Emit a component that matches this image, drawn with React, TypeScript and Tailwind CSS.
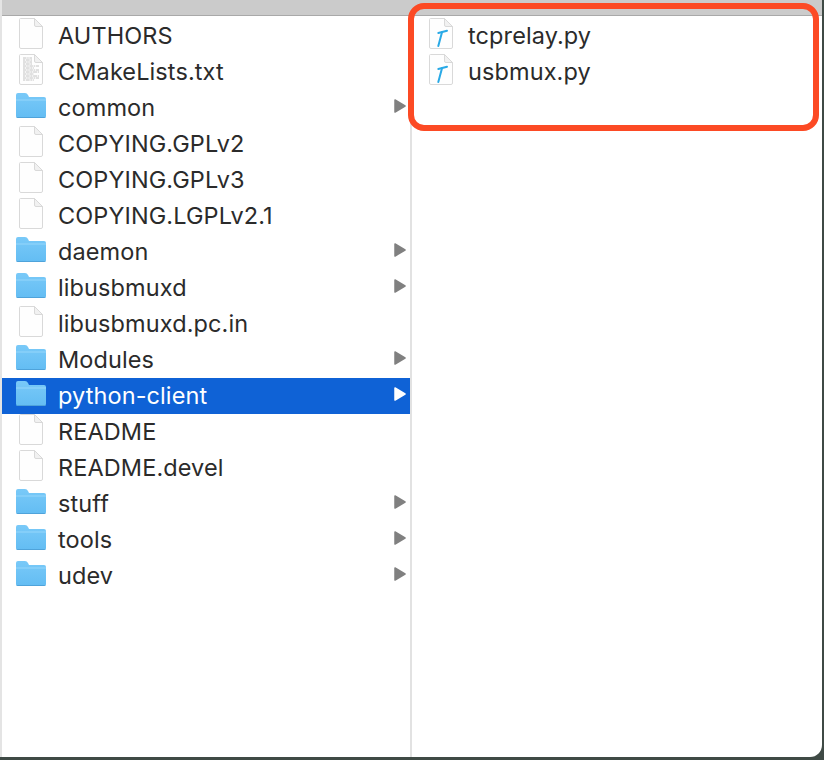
import React from 'react';

type Kind = 'doc' | 'text' | 'folder' | 'py';

interface Item {
  name: string;
  kind: Kind;
  selected?: boolean;
}

const leftItems: Item[] = [
  { name: 'AUTHORS', kind: 'doc' },
  { name: 'CMakeLists.txt', kind: 'text' },
  { name: 'common', kind: 'folder' },
  { name: 'COPYING.GPLv2', kind: 'doc' },
  { name: 'COPYING.GPLv3', kind: 'doc' },
  { name: 'COPYING.LGPLv2.1', kind: 'doc' },
  { name: 'daemon', kind: 'folder' },
  { name: 'libusbmuxd', kind: 'folder' },
  { name: 'libusbmuxd.pc.in', kind: 'doc' },
  { name: 'Modules', kind: 'folder' },
  { name: 'python-client', kind: 'folder', selected: true },
  { name: 'README', kind: 'doc' },
  { name: 'README.devel', kind: 'doc' },
  { name: 'stuff', kind: 'folder' },
  { name: 'tools', kind: 'folder' },
  { name: 'udev', kind: 'folder' },
];

const rightItems: Item[] = [
  { name: 'tcprelay.py', kind: 'py' },
  { name: 'usbmux.py', kind: 'py' },
];

const FolderIcon = () => (
  <svg width="30" height="25" viewBox="0 0 30 25" className="mb-[5px]">
    <defs>
      <linearGradient id="folderFill" x1="0" y1="0" x2="0" y2="1">
        <stop offset="0" stopColor="#79c9f8" />
        <stop offset="1" stopColor="#63bdf3" />
      </linearGradient>
    </defs>
    <path d="M0 5 V2 Q0 0 2 0 H9 Q11 0 12 2 L13 4 H28 Q30 4 30 6 V23 Q30 25 28 25 H2 Q0 25 0 23 Z" fill="url(#folderFill)" />
    <path d="M0 6.5 H30 V7.5 H0 Z" fill="#97d7fb" />
    <path d="M0 23 Q0 25 2 25 H28 Q30 25 30 23 V24 H0 Z" fill="#4fa3da" />
  </svg>
);

const PageIcon = ({ kind }: { kind: Kind }) => (
  <svg width="24" height="31" viewBox="0 0 24 31" className="mb-[5px]">
    <path d="M1.5 0.5 H15.5 L23.5 8.5 V29 Q23.5 30.5 22 30.5 H2 Q0.5 30.5 0.5 29 V1.5 Q0.5 0.5 1.5 0.5 Z" fill="#fefefe" stroke="#d9d9d9" />
    <path d="M15.5 0.5 V7 Q15.5 8.5 17 8.5 H23.5 Z" fill="#f1f1f1" stroke="#d9d9d9" />
    {kind === 'text' && (
      <g stroke="#b5b5b5" strokeWidth="0.8">
        {[4, 6, 8, 10].map((y, i) => (
          <line key={y} x1="4" x2="13" y1={y} y2={y} strokeDasharray={i % 2 ? '2 0.7 4 0.7' : '3.5 0.7 1.5 0.7'} />
        ))}
        {[12, 14, 16, 18, 20, 22, 24, 26].map((y, i) => (
          <line key={y} x1="4" x2={i % 3 === 1 ? 15 : 20} y1={y} y2={y} strokeDasharray={i % 2 ? '2 0.7 4 0.7' : '3.5 0.7 1.5 0.7'} />
        ))}
      </g>
    )}
    {kind === 'py' && (
      <g stroke="#29a9e6" fill="none" strokeLinecap="round">
        <path d="M9.3 15 L18 12.7" strokeWidth="2" />
        <path d="M13 14.3 L9.3 28" strokeWidth="2" />
      </g>
    )}
  </svg>
);

const Row = ({ item, showArrow }: { item: Item; showArrow?: boolean }) => (
  <div className={`flex items-center h-9 ${item.selected ? 'bg-[#0f62d6] text-white' : 'text-[#2b2b2b]'}`}>
    <div className="w-[56px] shrink-0 flex justify-center pl-[2px] items-center">
      {item.kind === 'folder' ? <FolderIcon /> : <PageIcon kind={item.kind} />}
    </div>
    <span className="flex-1 text-[23.5px] leading-none tracking-[0.1px]">{item.name}</span>
    {showArrow && item.kind === 'folder' && (
      <svg width="12" height="14" viewBox="0 0 12 14" className="mr-[4px] mb-[4px]">
        <path d="M1 1 L11 7 L1 13 Z" fill={item.selected ? '#ffffff' : '#808080'} stroke={item.selected ? '#ffffff' : '#808080'} strokeWidth="1.5" strokeLinejoin="round" />
      </svg>
    )}
  </div>
);

export default function App() {
  return (
    <div className="relative w-[824px] h-[760px] overflow-hidden bg-[#3f4a45] font-['Inter',sans-serif]">
      <div className="w-[822px] h-[757px] bg-white rounded-br-[12px] overflow-hidden flex flex-col border-l-2 border-[#e4e4e4]">
        <div className="h-[16px] shrink-0 bg-[#cbcbcb] border-b border-[#a9a9a9]" />
        <div className="flex flex-1">
          <div className="w-[408px] pt-[2px] border-r-2 border-r-[#e2e2e2] box-content">
            {leftItems.map((item) => (
              <Row key={item.name} item={item} showArrow />
            ))}
          </div>
          <div className="flex-1 pt-[2px]">
            {rightItems.map((item) => (
              <Row key={item.name} item={item} />
            ))}
          </div>
        </div>
      </div>
      {/* red annotation box drawn on top of the screenshot */}
      <div className="absolute left-[408px] top-[3px] w-[411px] h-[128px] border-[6px] border-[#fc4a24] rounded-[16px]" />
    </div>
  );
}
